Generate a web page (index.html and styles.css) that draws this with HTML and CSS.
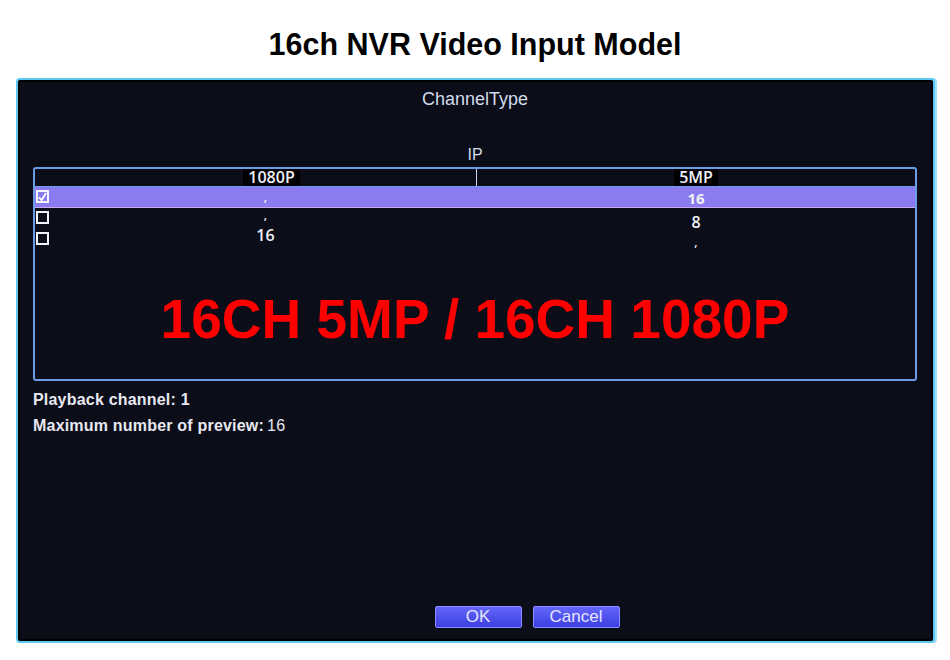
FILE: index.html
```html
<!DOCTYPE html>
<html lang="en">
<head>
    <meta charset="UTF-8">
    <title>16ch NVR Video Input Model</title>
    <meta name="viewport" content="width=device-width, initial-scale=1.0">
    <link rel="stylesheet" href="styles.css">
</head>
<body>

    <h1 class="page-title">16ch NVR Video Input Model</h1>

    <div class="screen">
        <div class="dialog-title">ChannelType</div>
        <div class="group-label">IP</div>

        <div class="channel-table">
            <div class="table-head">
                <div class="head-left"><span>1080P</span></div>
                <div class="head-right"><span>5MP</span></div>
            </div>

            <div class="table-row selected">
                <div class="check-cell">
                    <span class="checkbox">
                        <svg viewBox="0 0 10 10" width="9" height="9">
                            <path d="M1 6 L4 9 L9 1" fill="none" stroke="#fff" stroke-width="2"/>
                        </svg>
                    </span>
                </div>
                <div class="cell comma">,</div>
                <div class="cell strong">16</div>
            </div>

            <div class="table-row">
                <div class="check-cell"><span class="checkbox"></span></div>
                <div class="cell comma top">,</div>
                <div class="cell low">8</div>
            </div>

            <div class="table-row">
                <div class="check-cell"><span class="checkbox"></span></div>
                <div class="cell high">16</div>
                <div class="cell comma bottom">,</div>
            </div>

            <div class="promo">16CH 5MP / 16CH 1080P</div>
        </div>

        <div class="info">
            <p>Playback channel: 1</p>
            <p>Maximum number of preview:<span class="num">16</span></p>
        </div>

        <div class="buttons">
            <button class="btn">OK</button>
            <button class="btn">Cancel</button>
        </div>
    </div>

</body>
</html>
```

FILE: styles.css
```css
body {
    margin: 0;
    background: #ffffff;
    font-family: 'Liberation Sans', Arial, sans-serif;
}

.page-title {
    margin: 0;
    padding-top: 26px;
    height: 36px;
    margin-bottom: 16px;
    font-size: 30.5px;
    line-height: 36px;
    font-weight: bold;
    text-align: center;
    color: #000;
}

.screen {
    box-sizing: border-box;
    margin: 0 15px 0 16px;
    height: 565px;
    border: 2px solid #5cc8f0;
    border-radius: 4px;
    background: #0b0d19;
    box-shadow: inset 0 0 0 2px #000, 2px 0 0 #9fe2fa;
    display: flex;
    flex-direction: column;
    padding: 8px 16px 13px 15px;
    color: #f0f0f8;
}

.dialog-title {
    text-align: center;
    font-size: 18px;
    line-height: 22px;
    color: #d2dcec;
}

.group-label {
    margin-top: 34px;
    margin-bottom: 2px;
    text-align: center;
    font-size: 16px;
    line-height: 21px;
    color: #d2dcec;
}

.channel-table {
    height: 210px;
    border: 2px solid #6c9ce8;
    border-radius: 3px;
    display: flex;
    flex-direction: column;
    font-family: 'Open Sans', sans-serif;
    font-weight: 600;
    font-size: 16px;
}

.table-head {
    display: grid;
    grid-template-columns: 442px 1fr;
    height: 17px;
    border-bottom: 1px solid #6c9ce8;
    line-height: 17px;
    font-size: 16px;
}

.head-left {
    padding-left: 32px;
    text-align: center;
    border-right: 1px solid #c8d4f0;
}

.head-right {
    text-align: center;
}

.table-head span {
    display: inline-block;
    height: 17px;
    background: #000;
    padding: 0 5px;
}

.table-row {
    display: grid;
    grid-template-columns: 19px 423px 1fr;
    height: 21px;
}

.table-row.selected {
    height: 20px;
    background: #8a7cf0;
    border-bottom: 1px solid #c9aaf6;
}

.check-cell {
    display: flex;
    align-items: flex-start;
    padding: 3px 0 0 1px;
}

.checkbox {
    width: 9px;
    height: 9px;
    border: 2px solid #f4f4fc;
    display: flex;
    align-items: center;
    justify-content: center;
}

.cell {
    text-align: center;
    line-height: 21px;
}

.selected .cell {
    line-height: 20px;
}

.selected .cell.strong {
    padding-top: 3px;
    line-height: 17px;
    font-size: 15px;
    font-weight: 700;
}

.cell.comma {
    font-size: 12px;
}

.cell.top {
    line-height: 14px;
}

.cell.low {
    padding-top: 7px;
    line-height: 14px;
}

.cell.high {
    line-height: 12px;
}

.cell.bottom {
    padding-top: 5px;
    line-height: 16px;
}

.promo {
    flex: 1;
    display: flex;
    align-items: center;
    justify-content: center;
    padding-top: 8px;
    font-family: 'Liberation Sans', Arial, sans-serif;
    font-size: 55px;
    font-weight: bold;
    color: #ff0000;
}

.info {
    margin-top: 6px;
    font-size: 16px;
    font-weight: bold;
    letter-spacing: 0.2px;
    color: #e8e8f0;
}

.info p {
    margin: 0;
    line-height: 26px;
}

.info .num {
    font-weight: normal;
    padding-left: 3px;
}

.buttons {
    margin-top: auto;
    display: flex;
    justify-content: center;
    gap: 11px;
    padding-left: 104px;
}

.btn {
    width: 87px;
    height: 22px;
    padding: 0;
    border: 1px solid #8a8cff;
    border-radius: 2px;
    background: linear-gradient(#6466fa, #3c3ee0);
    color: #e4e6ff;
    font-family: 'Liberation Sans', Arial, sans-serif;
    font-size: 17px;
    line-height: 20px;
}
```
